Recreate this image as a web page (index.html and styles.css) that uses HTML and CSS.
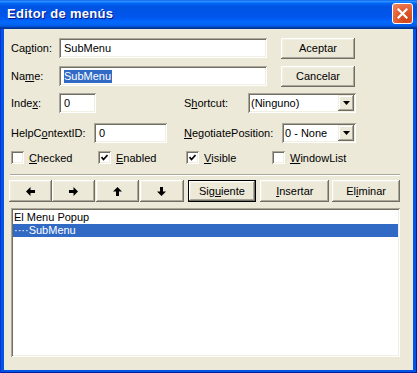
FILE: index.html
```html
<!DOCTYPE html>
<html lang="es">
<head>
    <meta charset="UTF-8">
    <title>Editor de menús</title>
    <link rel="stylesheet" href="styles.css">
</head>
<body>
    <div class="window">
        <div class="titlebar">
            <span class="title">Editor de menús</span>
            <div class="close">
                <svg width="11" height="11" viewBox="0 0 11 11"><path d="M1.5 1.5 L9.5 9.5 M9.5 1.5 L1.5 9.5" stroke="#fff" stroke-width="2.2" stroke-linecap="square"/></svg>
            </div>
        </div>

        <div class="client">
            <!-- caption / aceptar -->
            <div class="row row-caption">
                <span class="lbl lbl-main">Ca<u>p</u>tion:</span>
                <div class="field field-wide">SubMenu</div>
                <div class="btn btn-side">Aceptar</div>
            </div>
            <div class="row row-name">
                <span class="lbl lbl-main">Na<u>m</u>e:</span>
                <div class="field field-wide"><span class="sel">SubMenu</span></div>
                <div class="btn btn-side">Cancelar</div>
            </div>
            <div class="row row-index">
                <span class="lbl lbl-main">Inde<u>x</u>:</span>
                <div class="field field-index">0</div>
                <span class="lbl lbl-shortcut">S<u>h</u>ortcut:</span>
                <div class="field combo combo-shortcut">
                    <span>(Ninguno)</span>
                    <div class="drop"><svg width="7" height="4" viewBox="0 0 7 4"><polygon points="0,0 7,0 3.5,4" fill="#000"/></svg></div>
                </div>
            </div>
            <div class="row row-help">
                <span class="lbl lbl-help">HelpC<u>o</u>ntextID:</span>
                <div class="field field-help">0</div>
                <span class="lbl lbl-nego"><u>N</u>egotiatePosition:</span>
                <div class="field combo combo-nego">
                    <span>0 - None</span>
                    <div class="drop"><svg width="7" height="4" viewBox="0 0 7 4"><polygon points="0,0 7,0 3.5,4" fill="#000"/></svg></div>
                </div>
            </div>

            <!-- casillas -->
            <div class="checks">
                <label class="check check-a"><span class="box"></span><u>C</u>hecked</label>
                <label class="check check-b"><span class="box"><svg width="7" height="7" viewBox="0 0 7 7"><path d="M0.5 3 L2.5 5.5 L6.5 1" stroke="#000" stroke-width="1.6" fill="none"/></svg></span><u>E</u>nabled</label>
                <label class="check check-c"><span class="box"><svg width="7" height="7" viewBox="0 0 7 7"><path d="M0.5 3 L2.5 5.5 L6.5 1" stroke="#000" stroke-width="1.6" fill="none"/></svg></span><u>V</u>isible</label>
                <label class="check"><span class="box"></span><u>W</u>indowList</label>
            </div>

            <div class="sep"></div>

            <!-- botones de flechas -->
            <div class="nav">
                <div class="btn btn-arrow b1"><svg width="9" height="9" viewBox="0 0 9 9"><polygon points="0,4.5 4.5,0 4.5,3 9,3 9,6 4.5,6 4.5,9" fill="#000"/></svg></div>
                <div class="btn btn-arrow b2"><svg width="9" height="9" viewBox="0 0 9 9"><polygon points="9,4.5 4.5,0 4.5,3 0,3 0,6 4.5,6 4.5,9" fill="#000"/></svg></div>
                <div class="btn btn-arrow b3"><svg width="9" height="9" viewBox="0 0 9 9"><polygon points="4.5,0 0,4.5 3,4.5 3,9 6,9 6,4.5 9,4.5" fill="#000"/></svg></div>
                <div class="btn btn-arrow b4"><svg width="9" height="9" viewBox="0 0 9 9"><polygon points="4.5,9 0,4.5 3,4.5 3,0 6,0 6,4.5 9,4.5" fill="#000"/></svg></div>
                <div class="btn btn-text btn-default">Sig<u>u</u>iente</div>
                <div class="btn btn-text"><u>I</u>nsertar</div>
                <div class="btn btn-text btn-last">El<u>i</u>minar</div>
            </div>

            <div class="list">
                <div class="item">El Menu Popup</div>
                <div class="item item-sel">····SubMenu</div>
            </div>
        </div>
    </div>
</body>
</html>
```

FILE: styles.css
```css
* {
    box-sizing: border-box;
}
html, body {
    margin: 0;
    padding: 0;
}
body {
    font-family: "Liberation Sans", Arial, sans-serif;
    font-size: 11px;
    color: #000;
    background: #fff;
}
.window {
    width: 417px;
    height: 373px;
    display: flex;
    flex-direction: column;
    background: #0055e5;
    box-shadow: inset 1px 0 #0831d9, inset -1px 0 #001ea0, inset 0 -1px #001ea0;
}
.titlebar {
    height: 29px;
    display: flex;
    align-items: center;
    padding: 0 4px 2px 7px;
    background: linear-gradient(to bottom, #0058ee 0%, #3593ff 4%, #288eff 6%, #127dff 8%, #036ffc 10%, #0262ee 14%, #0057e5 20%, #0054e3 24%, #0055eb 56%, #005bf5 66%, #026afe 76%, #0062ef 86%, #0052d6 92%, #0040ab 94%, #003092 100%);
}
.title {
    flex: 1;
    color: #fff;
    font-weight: bold;
    font-size: 13px;
    text-shadow: 1px 1px #0a1883;
    letter-spacing: 0.3px;
}
.close {
    width: 21px;
    height: 21px;
    border: 1px solid #fff;
    border-radius: 3px;
    background: radial-gradient(circle at 70% 80%, #cc4419 0%, #e2592e 45%, #f08a66 100%);
    display: flex;
    align-items: center;
    justify-content: center;
}
.client {
    flex: 1;
    margin: 0 4px 3px 4px;
    background: #ece9d8;
    padding: 9px 13px 0 7px;
    display: flex;
    flex-direction: column;
}
.row {
    display: flex;
    align-items: center;
    height: 20px;
}
.row-name { margin-top: 8px; }
.row-index { margin-top: 7px; }
.row-help { margin-top: 10px; }

.lbl {
    white-space: nowrap;
}
.lbl-main { width: 48px; }
.lbl-shortcut { width: 64px; margin-left: 88px; }
.lbl-help { width: 83px; }
.lbl-nego { width: 98px; margin-left: 17px; }

/* campos hundidos */
.field {
    height: 20px;
    background: #fff;
    padding: 0 5px;
    display: flex;
    align-items: center;
    white-space: nowrap;
    box-shadow: inset 1px 1px #aca899, inset -1px -1px #fff, inset 2px 2px #716f64, inset -2px -2px #f1efe2;
}
.field-wide { width: 208px; }
.field-index { width: 37px; }
.field-help { width: 73px; }
.sel {
    background: #316ac5;
    color: #fff;
    line-height: 13px;
    padding: 0 1px 0 0;
}
.combo {
    justify-content: space-between;
    padding: 0 2px 0 3px;
}
.combo-shortcut { width: 108px; }
.combo-nego { width: 74px; }
.drop {
    width: 16px;
    height: 16px;
    background: #ece9d8;
    display: flex;
    align-items: center;
    justify-content: center;
    box-shadow: inset -1px -1px #716f64, inset 1px 1px #f1efe2, inset -2px -2px #aca899, inset 2px 2px #fff;
}

/* botones clasicos */
.btn {
    height: 22px;
    background: #ece9d8;
    display: flex;
    align-items: center;
    justify-content: center;
    white-space: nowrap;
    box-shadow: inset -1px -1px #716f64, inset 1px 1px #fff, inset -2px -2px #aca899, inset 2px 2px #f1efe2;
}
.btn-side {
    width: 74px;
    height: 21px;
    margin-left: 14px;
}
.btn-default {
    border: 1px solid #000;
}
.checks {
    display: flex;
    align-items: center;
    height: 13px;
    margin-top: 8px;
}
.check {
    display: flex;
    align-items: center;
    white-space: nowrap;
}
.check-a { width: 87px; }
.check-b { width: 88px; }
.check-c { width: 86px; }
.box {
    width: 13px;
    height: 13px;
    margin-right: 5px;
    background: #fff;
    display: flex;
    align-items: center;
    justify-content: center;
    box-shadow: inset 1px 1px #aca899, inset -1px -1px #fff, inset 2px 2px #716f64, inset -2px -2px #f1efe2;
}
.sep {
    height: 2px;
    margin: 10px 0 0 -1px;
    border-top: 1px solid #aca899;
    border-bottom: 1px solid #fff;
}
.nav {
    display: flex;
    margin-top: 4px;
    margin-left: -2px;
    height: 22px;
}
.btn-arrow { width: 43px; }
.b2 { margin-left: 0; }
.b3 { margin-left: 1px; }
.b4 { margin-left: 1px; width: 44px; }
.btn-text {
    width: 69px;
    margin-left: 4px;
}
.btn-last {
    width: 68px;
    margin-left: 3px;
}
.list {
    height: 149px;
    margin-top: 6px;
    background: #fff;
    padding: 3px 2px 2px 2px;
    box-shadow: inset 1px 1px #aca899, inset -1px -1px #fff, inset 2px 2px #716f64, inset -2px -2px #f1efe2;
}
.item {
    height: 13px;
    line-height: 13px;
    padding-left: 1px;
    white-space: nowrap;
}
.item-sel {
    background: #316ac5;
    color: #fff;
}
```
